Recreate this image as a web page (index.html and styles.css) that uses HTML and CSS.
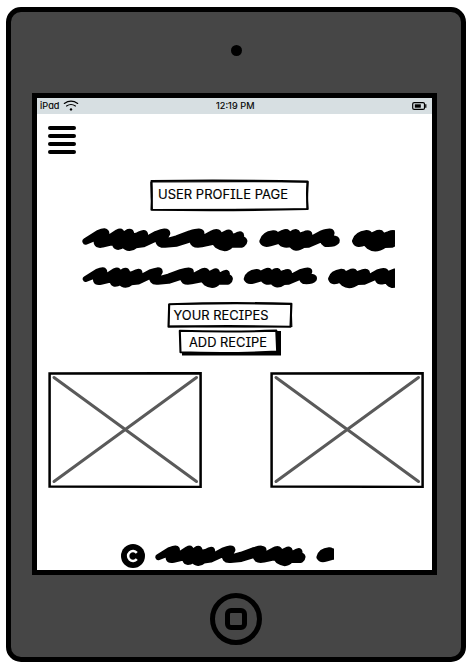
FILE: index.html
```html
<!DOCTYPE html>
<html lang="en">
<head>
<meta charset="utf-8">
<title>User Profile Page</title>
<link rel="stylesheet" href="styles.css">
</head>
<body>
<div class="tablet">
  <div class="camera"></div>
  <main class="screen">
    <header class="status">
      <div class="carrier">
        <svg width="36" height="16" viewBox="0 0 36 16"><text class="small" x="0" y="11" textLength="19.5">iPad</text></svg>
        <svg class="wifi" width="16" height="16" viewBox="0 0 16 16"><path d="M1.3 5.4Q8 .8 14.7 5.4M3.6 8Q8 5 12.4 8"/><circle cx="8" cy="11.4" r="1.2"/></svg>
      </div>
      <svg width="40" height="16" viewBox="0 0 40 16"><text class="small" x="0" y="11" textLength="38.5">12:19 PM</text></svg>
      <svg class="battery" width="16" height="16" viewBox="0 0 16 16"><rect x="0.7" y="4.6" width="11.8" height="6.8" rx="1.5"/><path d="M13.8 6.3V9.7"/><rect class="charge" x="2.8" y="6.3" width="6" height="3.4"/></svg>
    </header>
    <nav class="menu"><i></i><i></i><i></i><i></i></nav>
    <svg class="heading" width="161" height="33" viewBox="0 0 161 33">
      <path class="frame" d="M2.5 2Q80 .9 158.5 2.6Q157.5 16 158.7 30Q80 31.8 2.5 30.7Q3.2 16 2.5 2Z"/>
      <path class="thin" d="M2 3Q80 2.4 159 2.8L158 30.2Q80 30.2 3.3 30.6Q1.8 16 2 3"/>
      <text x="9" y="20.2" textLength="130" lengthAdjust="spacingAndGlyphs">USER PROFILE PAGE</text>
    </svg>
    <svg class="bio" width="313" height="66" viewBox="21 6 939 198">
      <defs>
        <g id="scribbles" class="scribble">
          <path id="long-word" d="M32 58L70 34Q95 23 93 36L80 63L128 32Q142 24 140 44L160 31Q172 28 165 46L188 41Q214 26 208 42L196 63L245 36Q275 24 276 34L259 63L305 50L345 35Q382 24 378 36L361 63L410 36Q434 22 432 46L458 33Q470 30 460 47L480 44Q504 28 495 50Q516 54 501 67L468 67Q452 86 428 70L418 58L380 66Q348 72 355 48L305 64L270 67Q246 70 252 44L205 66L182 69Q162 86 146 67Q120 84 120 58L82 67Q56 72 72 42Z"/>
          <path id="short-word" d="M563 58Q568 38 595 35Q606 34 599 46L625 33Q642 26 638 45L658 32Q672 28 662 46L687 38Q708 28 700 47L690 62L740 35Q774 24 768 36L758 54Q788 46 784 58Q776 67 752 65Q740 58 749 46L700 67L685 68Q660 86 648 65Q620 72 616 54L585 63Q568 68 563 58Z"/>
          <path d="M841 57Q846 38 875 34Q886 34 882 46L908 34Q924 30 915 47L942 37Q964 28 958 45L947 63L995 36Q1026 24 1022 45L1050 33L1080 31L1080 75L1042 78Q1026 72 1030 62L1008 66Q990 68 998 46L950 67L928 68Q902 86 882 72L870 60Q846 72 841 57Z"/>
        </g>
      </defs>
      <use href="#scribbles"/>
      <use href="#scribbles" transform="translate(3 118.5) scale(.91 .905)"/>
    </svg>
    <svg class="recipes" width="128" height="28" viewBox="0 0 128 28">
      <path class="frame" d="M3.2 3.2Q65 1.1 125.4 2.9L124.5 25.8Q65 24.5 2.5 25.7Z"/>
      <path class="thin" d="M3 3.5Q60 2 125 3.1L125.8 25.5Q65 26.6 2.6 24.8Z"/>
      <text x="7.5" y="18.5" textLength="95" lengthAdjust="spacingAndGlyphs">YOUR RECIPES</text>
    </svg>
    <svg class="add" width="104" height="29" viewBox="0 0 104 29">
      <path class="shade" d="M5 23H98V3H104V27.5H5Z"/>
      <path class="frame" d="M2.8 2.7Q50 4.4 99.3 2.6L100.2 23.6Q50 26 3.5 24.2Z"/>
      <text x="12" y="18.8" textLength="78" lengthAdjust="spacingAndGlyphs">ADD RECIPE</text>
    </svg>
    <section class="gallery">
      <svg width="154" height="116" viewBox="0 0 154 116"><path class="cross" d="M6 5.5L148.5 109.5M148.5 5.5L6 109.5"/><path class="photo" d="M1.6 1.4L152.6 1.2V114.9L1.6 114.4Z"/></svg>
      <svg width="154" height="116" viewBox="0 0 154 116"><path class="cross" d="M6 5.5L148.5 109.5M148.5 5.5L6 109.5"/><path class="photo" d="M1.6 1.4L152.6 1.2V114.9L1.6 114.4Z"/></svg>
    </section>
    <footer class="footer">
      <svg width="24" height="24" viewBox="0 0 24 24"><circle cx="12" cy="12" r="12"/><path class="copy" d="M15.8 8.9A4.9 4.9 0 1 0 15.8 15.1"/></svg>
      <svg width="179" height="24" viewBox="135 27 537 72">
        <g class="scribble" transform="translate(116 14) scale(.91 .905)">
          <use href="#long-word"/>
          <use href="#short-word"/>
        </g>
      </svg>
    </footer>
  </main>
  <div class="home"><div class="square"></div></div>
</div>
</body>
</html>
```

FILE: styles.css
```css
* { box-sizing: border-box; }
body {
  margin: 0;
  padding: 7px 0 0 6px;
  background: #fff;
  font-family: Inter, "Liberation Sans", sans-serif;
}
svg { display: block; flex: none; }
text {
  font-size: 12.6px;
  font-feature-settings: "cv08", "cv11";
  fill: #000;
  stroke: #000;
  stroke-width: 0.15;
}
.small { font-size: 9.2px; }
.tablet {
  width: 460px;
  height: 655px;
  border: 5px solid #000;
  border-radius: 15px;
  background: #464646;
  display: flex;
  flex-direction: column;
  align-items: center;
}
.camera {
  width: 11px;
  height: 11px;
  margin: 32.5px 0 37.5px;
  border-radius: 50%;
  background: #000;
  flex: none;
}
.screen {
  width: 405px;
  height: 482px;
  margin-right: 3px;
  border: 5px solid #000;
  background: #fff;
  display: flex;
  flex-direction: column;
  flex: none;
}
.status {
  height: 16px;
  padding: 0 4px 0 3px;
  background: #d7dfe2;
  display: grid;
  grid-template-columns: 176px 1fr 16px;
  flex: none;
}
.carrier { display: flex; }
.wifi { margin-left: -13px; }
.wifi path { fill: none; stroke: #000; stroke-width: 1.2; stroke-linecap: round; }
.battery rect, .battery path { fill: none; stroke: #000; stroke-width: 1.2; }
.battery .charge { fill: #000; stroke: none; }
.menu {
  width: 28px;
  margin: 12px 0 0 11px;
  display: grid;
  gap: 4px;
}
.menu i { height: 4px; border-radius: 2px; background: #000; }
.heading { margin: 25px 0 0 112px; }
.bio { margin: 12px 0 0 45px; }
.recipes { margin: 11px 0 0 129px; }
.add { margin: -1px 0 0 140px; }
.frame { fill: #fff; stroke: #000; stroke-width: 2.1; stroke-linejoin: round; }
.thin { fill: none; stroke: #000; stroke-width: 1.2; }
.shade { fill: #000; }
.scribble {
  fill: #000;
  stroke: #000;
  stroke-width: 20;
  stroke-linecap: round;
  stroke-linejoin: round;
}
.gallery {
  margin: 15px 8px 0 11px;
  display: flex;
  justify-content: space-between;
}
.photo { fill: none; stroke: #000; stroke-width: 2.5; }
.cross { fill: none; stroke: #5a5a5a; stroke-width: 3; stroke-linecap: round; }
.footer {
  margin: 56px 0 0 84px;
  display: flex;
  gap: 10px;
}
.copy { fill: none; stroke: #fff; stroke-width: 2.5; }
.home {
  width: 52px;
  height: 52px;
  margin-top: 18px;
  border: 5px solid #000;
  border-radius: 50%;
  display: grid;
  place-items: center;
  flex: none;
}
.square {
  width: 22px;
  height: 22px;
  border: 5px solid #000;
  border-radius: 6px;
}
```
